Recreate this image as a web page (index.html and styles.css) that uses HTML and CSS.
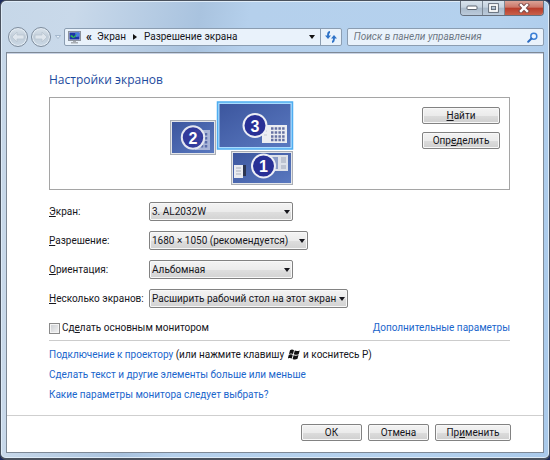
FILE: index.html
```html
<!DOCTYPE html>
<html lang="ru">
<head>
<meta charset="utf-8">
<title>Разрешение экрана</title>
<link rel="stylesheet" href="styles.css">
</head>
<body>
<div class="window">
  <div class="caption">
    <button class="caption-btn" aria-label="Свернуть"><svg width="12" height="6" viewBox="0 0 12 6"><rect x="1" y="1" width="10" height="3.5" rx="1" fill="#fff" stroke="#5c6470"/></svg></button>
    <button class="caption-btn" aria-label="Развернуть"><svg width="11" height="10" viewBox="0 0 11 10"><rect x="2" y="2" width="7" height="6" fill="none" stroke="#5c6470" stroke-width="3.6"/><rect x="2" y="2" width="7" height="6" fill="none" stroke="#fff" stroke-width="1.8"/></svg></button>
    <button class="caption-btn close" aria-label="Закрыть"><svg width="12" height="10" viewBox="0 0 12 10"><path d="M3 2l6 6M9 2L3 8" stroke="#7a4a48" stroke-width="4.2" stroke-linecap="square"/><path d="M3 2l6 6M9 2L3 8" stroke="#fff" stroke-width="2.4" stroke-linecap="square"/></svg></button>
  </div>
  <header class="toolbar">
    <div class="nav">
      <button class="nav-btn" aria-label="Назад"><svg width="14" height="12" viewBox="0 0 14 12"><path d="M1 6l5-5v3h7v4H6v3z" fill="#dfe6ed" stroke="#b9c5d1" stroke-width=".8"/></svg></button>
      <button class="nav-btn" aria-label="Вперёд"><svg width="14" height="12" viewBox="0 0 14 12"><path d="M13 6L8 1v3H1v4h7v3z" fill="#dfe6ed" stroke="#b9c5d1" stroke-width=".8"/></svg></button>
      <svg class="history" width="6" height="4" viewBox="0 0 6 4"><path d="M.5.5h5L3 3.5z" fill="#e8f1fa" stroke="#8fa6bf" stroke-width=".7"/></svg>
    </div>
    <nav class="address">
      <svg width="13" height="13" viewBox="0 0 13 13"><rect x=".5" y=".5" width="12" height="9" fill="#d5d9df" stroke="#8d949e"/><rect x="1.5" y="1.5" width="10" height="7" fill="#1c35a8"/><path d="M7 1.5h4.5v4L8 6z" fill="#4b7de0"/><path d="M2 5l2-1 1.5 2L9 2.5 7.500 6 5 7z" fill="#35c24a"/><path d="M5 10h3v1h2v1.500H3V11h2z" fill="#a8adb3"/></svg>
      <span class="crumb-more">«</span>
      <a href="#">Экран</a>
      <svg width="4" height="6" viewBox="0 0 4 6"><path d="M0 0l4 3-4 3z" fill="#111"/></svg>
      <a href="#">Разрешение экрана</a>
      <svg class="drop" width="6" height="4" viewBox="0 0 6 4"><path d="M0 0h6L3 4z" fill="#111"/></svg>
      <button class="refresh" aria-label="Обновить"><svg width="12" height="12" viewBox="0 0 12 12"><path d="M5 1C3 1 3 2.500 3 5M7 11C9 11 9 9.500 9 7" fill="none" stroke="#2f73c8" stroke-width="1.800"/><path d="M0 4.500h6L3 8zM6 7.500h6L9 4z" fill="#2f73c8"/></svg></button>
    </nav>
    <label class="search">
      <input type="search" placeholder="Поиск в панели управления" aria-label="Поиск в панели управления">
      <svg width="11" height="11" viewBox="0 0 11 11"><circle cx="6.800" cy="4.200" r="3" fill="#eef6ff" stroke="#3a7fd6" stroke-width="1.500"/><path d="M4.500 6.500L1.200 9.800" stroke="#2d6cc0" stroke-width="2" stroke-linecap="round"/></svg>
    </label>
  </header>
  <main class="client">
    <form class="page">
      <h1>Настройки экранов</h1>
      <section class="preview">
        <svg class="monitors" width="128" height="86" viewBox="0 0 128 86" role="img" aria-label="Схема мониторов">
          <defs>
            <linearGradient id="screen" x1="0" y1="0" x2="1" y2="1"><stop offset="0" stop-color="#3c569e"/><stop offset="1" stop-color="#5a79c0"/></linearGradient>
          </defs>
          <g>
            <rect x=".5" y="19.500" width="45" height="34" fill="#e4e6ea" stroke="#aaaeb5"/>
            <rect x="2" y="21" width="42" height="31" fill="url(#screen)"/>
            <rect x="25" y="29" width="15" height="20" fill="#a9b5d8"/>
            <path d="M28 32v15M32 32v15M36 32v15" stroke="#5b6daa" stroke-width="2.500" stroke-dasharray="2.500 1.500"/>
            <circle cx="23" cy="36.500" r="11.200" fill="#30379a" fill-opacity=".93" stroke="#e3e6f0" stroke-width="2"/>
            <text x="23" y="42.500">2</text>
          </g>
          <g>
            <rect x="61.500" y="50.500" width="61" height="33" fill="#e4e6ea" stroke="#aaaeb5"/>
            <rect x="63" y="52" width="58" height="30" fill="url(#screen)"/>
            <rect x="64" y="64" width="9" height="13" fill="#e9ebf0"/>
            <path d="M66 67h5M66 70h5M66 73h5" stroke="#aab0bd"/>
            <rect x="73" y="64" width="3" height="11" fill="#2c3550"/>
            <rect x="98" y="54" width="20" height="16" fill="#dde1e9"/>
            <rect x="100" y="56" width="8" height="12" fill="#8a9bc6"/>
            <path d="M111 56h5v6h-5zM111 64h5v4h-5z" fill="#bdc3d0"/>
            <circle cx="93.500" cy="65" r="11.500" fill="#283096" stroke="#eceef5" stroke-width="2"/>
            <text x="93.500" y="71">1</text>
          </g>
          <g>
            <rect x="47.500" y="1" width="75" height="47" fill="#a9dcff" stroke="#4fadf0" stroke-width="1.500"/>
            <rect x="49.500" y="3" width="71" height="43" fill="url(#screen)"/>
            <rect x="92" y="24" width="25" height="18" fill="#eceef2"/>
            <path d="M101 27.500h14M101 31.500h14M101 35.500h14M101 39h14" stroke="#6672a3" stroke-width="2.500" stroke-dasharray="2.500 1.200"/>
            <path d="M94 30h3M94 34h3" stroke="#c3c8d2"/>
            <circle cx="85" cy="24.500" r="11.500" fill="#283096" stroke="#eceef5" stroke-width="2"/>
            <text x="85" y="30.500">3</text>
          </g>
        </svg>
        <div class="preview-actions">
          <button type="button" class="btn"><u>Н</u>айти</button>
          <button type="button" class="btn">Опр<u>е</u>делить</button>
        </div>
      </section>
      <div class="fields">
        <label for="display"><u>Э</u>кран:</label>
        <div class="select"><select id="display"><option>3. AL2032W</option></select></div>
        <label for="resolution"><u>Р</u>азрешение:</label>
        <div class="select medium"><select id="resolution"><option>1680 × 1050 (рекомендуется)</option></select></div>
        <label for="orientation"><u>О</u>риентация:</label>
        <div class="select"><select id="orientation"><option>Альбомная</option></select></div>
        <label for="multiple"><u>Н</u>есколько экранов:</label>
        <div class="select wide"><select id="multiple"><option>Расширить рабочий стол на этот экран</option></select></div>
      </div>
      <div class="primary-row">
        <label class="check"><input type="checkbox"><span>Сд<u>е</u>лать основным монитором</span></label>
        <a href="#">Дополнительные параметры</a>
      </div>
      <ul class="links">
        <li><a href="#">Подключение к проектору</a> (или нажмите клавишу
          <svg class="winkey" width="12" height="11" viewBox="0 0 12 11"><path d="M2 1.200C3.500.3 4.800.5 6 1.200L5 5C3.800 4.300 2.500 4.200 1 5zM6.800 1.600C8.300 2.300 10 2.200 11.700 1.500L10.700 5.200C9 6 7.300 6 5.800 5.300zM.8 5.800C2.300 5 3.600 5.100 4.800 5.800L3.800 9.600C2.600 8.900 1.300 8.800-.2 9.600zM5.600 6.200C7.100 6.900 8.800 6.800 10.500 6.100L9.500 9.800C7.800 10.600 6.100 10.600 4.600 9.900z" fill="#111"/></svg>
          и коснитесь P)</li>
        <li><a href="#">Сделать текст и другие элементы больше или меньше</a></li>
        <li><a href="#">Какие параметры монитора следует выбрать?</a></li>
      </ul>
    </form>
    <footer class="actions">
      <button class="btn">ОК</button>
      <button class="btn">Отмена</button>
      <button class="btn apply">Пр<u>и</u>менить</button>
    </footer>
  </main>
</div>
</body>
</html>
```
FILE: styles.css
```css
* { box-sizing: border-box; }

body {
  margin: 0;
  background: #1d2c5c;
  color: #16161c;
  font: 10px/14px Roboto, "Noto Sans", sans-serif;
}

button, input, select { font: inherit; color: inherit; margin: 0; }
a { color: #1a66cc; text-decoration: none; }
u { text-underline-offset: 1px; }

.window {
  position: relative;
  display: flex;
  flex-direction: column;
  min-height: 100vh;
  padding: 26px 5px 5px;
  border: 1px solid #4a525e;
  border-bottom-width: 2px;
  border-radius: 6px;
  background: linear-gradient(100deg, #c6d7e8 0, #c9d9ea 12%, #a9c3df 32%, #b5d0ec 40%, #b4d1ee 80%, #a9c9ea 100%);
  box-shadow: inset 0 0 0 1px #dfecf8;
}

.caption {
  position: absolute;
  top: 0;
  right: 5px;
  display: flex;
  height: 15px;
  border: 1px solid #66707e;
  border-top: 0;
  border-radius: 0 0 4px 4px;
  overflow: hidden;
}
.caption-btn {
  display: grid;
  place-items: center;
  width: 22px;
  padding: 0;
  border: 0;
  border-right: 1px solid #7b8794;
  background: linear-gradient(#d8e2ec, #c5d2df 45%, #a9b9ca 50%, #bccbdb);
}
.caption-btn.close {
  width: 38px;
  border-right: 0;
  background: linear-gradient(#dba397, #cc7668 45%, #b83c2a 50%, #c9604a);
}

.toolbar { display: flex; align-items: center; height: 20px; }
.nav { display: flex; align-items: center; gap: 3px; width: 58px; padding-left: 2px; }
.nav-btn {
  display: grid;
  place-items: center;
  flex: none;
  width: 20px;
  height: 20px;
  padding: 0;
  border: 1px solid #7f8d9d;
  border-radius: 50%;
  background: linear-gradient(#dbe4ec, #c0ccd8 50%, #cbd9e6);
  box-shadow: inset 0 0 0 1px #e6eef5;
}
.history { flex: none; margin-left: 1px; }

.address, .search {
  display: flex;
  align-items: center;
  height: 18px;
  border: 1px solid #8b9db1;
  border-radius: 2px;
  background: #e9f2fb;
}
.address { flex: 271; gap: 7px; padding-left: 3px; white-space: nowrap; }
.address a { color: inherit; }
.address svg { flex: none; }
.crumb-more { margin: 0 -2px; font-size: 12px; font-weight: bold; }
.address .drop { margin-left: auto; margin-right: -2px; }
.refresh {
  display: grid;
  place-items: center;
  width: 21px;
  height: 16px;
  padding: 0;
  border: 0;
  border-left: 1px solid #8b9db1;
  background: none;
}
.search { flex: 183; margin-left: 5px; padding: 0 5px 0 6px; }
.search input {
  flex: 1;
  min-width: 0;
  padding: 0;
  border: 0;
  outline: 0;
  background: none;
  font-style: italic;
}
.search input::placeholder { color: #6d7783; }

.client {
  flex: 1;
  display: flex;
  flex-direction: column;
  margin-top: 5px;
  border: 1px solid #7e8996;
  background: #fff;
  box-shadow: inset 0 1px #c9d3e4;
}
.page { flex: 1; padding: 17px 33px 0 42px; }
h1 { margin: 0; color: #1c4a9e; font-family: "Open Sans", sans-serif; font-size: 12px; font-weight: normal; line-height: 20px; }

.preview {
  display: flex;
  justify-content: space-between;
  margin-top: 7px;
  padding: 3px 9px 2px 120px;
  border: 1px solid #a5a5a5;
}
.preview text { fill: #fff; font: bold 16px "Liberation Sans", sans-serif; text-anchor: middle; }
.monitors { flex: none; display: block; }
.preview-actions { display: flex; flex-direction: column; gap: 8px; width: 78px; padding-top: 6px; }

.btn {
  height: 17px;
  padding: 0;
  border: 1px solid #828282;
  border-radius: 2px;
  background: linear-gradient(#f3f3f3, #ebebeb 50%, #dcdcdc 52%, #cfcfcf);
  box-shadow: inset 0 0 0 1px #f8f8f8;
  line-height: 14px;
}

.fields {
  display: grid;
  grid-template-columns: 100px 1fr;
  row-gap: 10px;
  align-items: center;
  margin-top: 12px;
}
.select { position: relative; width: 144px; }
.select.medium { width: 159px; }
.select.wide { width: 199px; }
.select::after {
  content: "";
  position: absolute;
  top: 8px;
  right: 3px;
  border: 3px solid transparent;
  border-top: 4px solid #16161c;
  border-bottom: 0;
  pointer-events: none;
}
.select select {
  appearance: none;
  display: block;
  width: 100%;
  height: 19px;
  padding: 0 2px;
  border: 1px solid #828282;
  border-radius: 2px;
  background: linear-gradient(#f3f3f3, #ebebeb 50%, #dedede 52%, #d2d2d2);
  box-shadow: inset 0 0 0 1px #f8f8f8;
}

.primary-row {
  display: flex;
  justify-content: space-between;
  margin-top: 13px;
  padding-bottom: 5px;
  border-bottom: 1px solid #cccccc;
}
.check { display: flex; align-items: center; gap: 2px; }
.check input {
  appearance: none;
  width: 11px;
  height: 11px;
  border: 1px solid #8a8a8a;
  background: linear-gradient(135deg, #c9ccd0, #f4f4f4);
  box-shadow: inset 0 0 0 1px #f4f4f4;
}

.links { display: grid; gap: 6px; margin: 7px 0 0; padding: 0; list-style: none; }
.winkey { margin: 0 1px; vertical-align: -2px; }

.actions {
  display: flex;
  justify-content: flex-end;
  gap: 6px;
  padding: 8px 32px 11px;
  border-top: 1px solid #cfcfcf;
}
.actions .btn { width: 61px; }
.actions .apply { width: 76px; }
```
